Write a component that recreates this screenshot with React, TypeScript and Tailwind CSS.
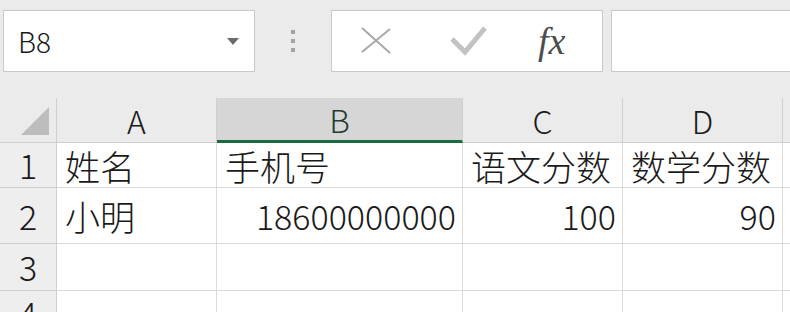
const cols = ["A", "B", "C", "D", ""]

type Cell = { text: string; right?: boolean; num?: boolean }

const rows: { n: number; h: string; cells: Cell[] }[] = [
  {
    n: 1,
    h: "h-[45px]",
    cells: [{ text: "姓名" }, { text: "手机号" }, { text: "语文分数" }, { text: "数学分数" }, { text: "" }],
  },
  {
    n: 2,
    h: "h-[56px]",
    cells: [
      { text: "小明" },
      { text: "18600000000", right: true, num: true },
      { text: "100", right: true, num: true },
      { text: "90", right: true, num: true },
      { text: "" },
    ],
  },
  { n: 3, h: "h-[47px]", cells: [{ text: "" }, { text: "" }, { text: "" }, { text: "" }, { text: "" }] },
  { n: 4, h: "h-[45px]", cells: [{ text: "" }, { text: "" }, { text: "" }, { text: "" }, { text: "" }] },
]

const App = () => {
  return (
    <div
      className="w-[790px] h-[312px] overflow-hidden bg-[#ebebeb] text-[#1a1a1a] font-light"
      style={{ fontFamily: '"Noto Sans CJK SC", "Noto Sans", sans-serif' }}
    >
      {/* Formula bar */}
      <div className="flex pt-[10px] h-[98px] items-start">
        {/* Name box */}
        <div className="shrink-0 ml-[3px] w-[252px] h-[62px] bg-white border border-[#c9c9c9] flex items-center justify-between pl-[14px] pr-[15px]">
          <span className="text-[28px] leading-none">B8</span>
          <svg width="12" height="7" viewBox="0 0 12 7">
            <polygon points="0,0 12,0 6,7" fill="#6b6b6b" />
          </svg>
        </div>

        {/* Drag handle */}
        <div className="shrink-0 w-[76px] h-[62px] flex flex-col items-center justify-center gap-[5px]">
          <span className="w-[4px] h-[4px] bg-[#a3a3a3]" />
          <span className="w-[4px] h-[4px] bg-[#a3a3a3]" />
          <span className="w-[4px] h-[4px] bg-[#a3a3a3]" />
        </div>

        {/* Cancel / Enter / fx */}
        <div className="shrink-0 w-[272px] h-[62px] bg-white border border-[#c9c9c9] flex items-center">
          <svg className="ml-[28px]" width="32" height="30" viewBox="0 0 32 30">
            <line x1="2" y1="2" x2="30" y2="27" stroke="#a8a8a8" strokeWidth="2" />
            <line x1="30" y1="3" x2="2" y2="26" stroke="#a8a8a8" strokeWidth="2" />
          </svg>
          <svg className="ml-[58px]" width="38" height="32" viewBox="0 0 38 32">
            <polyline points="2,14 15,27 35,3" fill="none" stroke="#c2c2c2" strokeWidth="5" />
          </svg>
          <span
            className="ml-[50px] text-[38px] italic font-normal leading-none text-[#4d4d4d]"
            style={{ fontFamily: '"Liberation Serif", serif' }}
          >
            fx
          </span>
        </div>

        {/* Formula input */}
        <div className="shrink-0 ml-[8px] w-[200px] h-[62px] bg-white border border-[#c9c9c9]" />
      </div>

      {/* Sheet grid */}
      <div className="grid grid-cols-[57px_160px_246px_160px_160px_1fr]">
        {/* Corner */}
        <div className="h-[45px] bg-[#ebebeb] border-r border-b border-[#cfcfcf] flex items-end justify-end pr-[7px] pb-[7px]">
          <svg width="28" height="28" viewBox="0 0 28 28">
            <polygon points="0,28 28,28 28,0" fill="#bdbdbd" />
          </svg>
        </div>
        {cols.map((c) =>
          c === "B" ? (
            <div
              key={c}
              className="h-[45px] bg-[#d6d6d6] border-r border-[#cfcfcf] border-b-[3px] border-b-[#1d6b40] flex items-center justify-center text-[32px] leading-none text-[#1f3d2c]"
            >
              {c}
            </div>
          ) : (
            <div
              key={c}
              className="h-[45px] bg-[#ebebeb] border-r border-b border-[#cfcfcf] flex items-center justify-center text-[32px] leading-none"
            >
              {c}
            </div>
          )
        )}

        {rows.map((r) => (
          <>
            <div
              key={"n" + r.n}
              className={`${r.h} bg-[#eeeeee] border-r border-b border-[#cfcfcf] flex items-center justify-center text-[34px] leading-none`}
            >
              {r.n}
            </div>
            {r.cells.map((cell, i) => (
              <div
                key={r.n + "-" + i}
                className={`${r.h} bg-white border-r border-b border-[#dadada] flex items-center overflow-visible whitespace-nowrap leading-none ${
                  cell.right ? "justify-end pr-[6px]" : "justify-start pl-[8px]"
                } ${cell.num ? "text-[34px]" : "text-[35px]"}`}
              >
                {cell.text}
              </div>
            ))}
          </>
        ))}
      </div>
    </div>
  )
}

export default App
